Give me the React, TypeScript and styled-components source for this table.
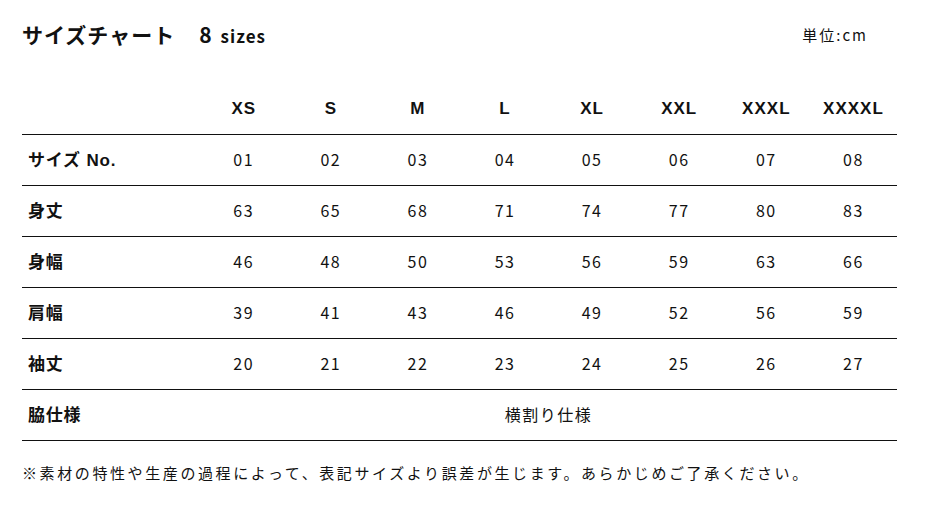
import React from 'react';
import styled, { createGlobalStyle } from 'styled-components';

const GlobalStyle = createGlobalStyle`
    html, body {
        margin: 0;
        padding: 0;
        background: #ffffff;
    }
    body {
        font-family: "Liberation Sans", "Noto Sans CJK JP", sans-serif;
        color: #111111;
    }
`;

const Page = styled.div`
    width: 951px;
    padding: 19px 54px 0 22px;
    box-sizing: border-box;
`;

const Heading = styled.div`
    display: flex;
    align-items: baseline;
    justify-content: space-between;
    height: 35px;
`;

const Title = styled.h1`
    margin: 0;
    font-family: "Noto Sans CJK JP", sans-serif;
    font-size: 21px;
    font-weight: 700;
    letter-spacing: 1px;
`;

const Count = styled.span`
    margin-left: 24px;
    font-size: 21px;
    letter-spacing: 0;
`;

const CountUnit = styled.span`
    margin-left: 9px;
    font-size: 17px;
    letter-spacing: 1px;
`;

const Unit = styled.div`
    font-family: "Noto Sans CJK JP", sans-serif;
    font-size: 15px;
    letter-spacing: 2px;
    padding-right: 29px;
    position: relative;
    top: -2px;
`;

const Table = styled.table`
    margin-top: 29px;
    width: 875px;
    border-collapse: collapse;
    table-layout: fixed;
`;

const HeadCell = styled.th<{ label?: boolean }>`
    height: 51px;
    padding: 0;
    width: ${p => (p.label ? '178px' : '87px')};
    text-align: center;
    font-size: 17px;
    font-weight: 700;
    letter-spacing: 1px;
    vertical-align: middle;
    border-bottom: 1px solid #111111;
`;

const Row = styled.tr`
    height: 51px;
    border-bottom: 1px solid #111111;
`;

const Label = styled.th`
    padding: 0 0 3px 6px;
    text-align: left;
    font-size: 17px;
    font-weight: 700;
    letter-spacing: 0.8px;
`;

const Cell = styled.td`
    padding: 0 0 3px;
    text-align: center;
    font-size: 16px;
    letter-spacing: 1.5px;
    font-family: "Noto Sans CJK JP", sans-serif;
`;

const Note = styled.p`
    margin: 21px 0 0;
    font-family: "Noto Sans CJK JP", sans-serif;
    font-size: 15px;
    letter-spacing: 2.6px;
`;

const sizes = ['XS', 'S', 'M', 'L', 'XL', 'XXL', 'XXXL', 'XXXXL'];

const rows: { label: string; values: string[] }[] = [
    { label: 'サイズ No.', values: ['01', '02', '03', '04', '05', '06', '07', '08'] },
    { label: '身丈', values: ['63', '65', '68', '71', '74', '77', '80', '83'] },
    { label: '身幅', values: ['46', '48', '50', '53', '56', '59', '63', '66'] },
    { label: '肩幅', values: ['39', '41', '43', '46', '49', '52', '56', '59'] },
    { label: '袖丈', values: ['20', '21', '22', '23', '24', '25', '26', '27'] },
];

const App: React.FC = () => {
    return (
        <>
            <GlobalStyle />
            <Page>
                <Heading>
                    <Title>
                        サイズチャート
                        <Count>8</Count>
                        <CountUnit>sizes</CountUnit>
                    </Title>
                    <Unit>単位:cm</Unit>
                </Heading>
                <Table>
                    <thead>
                        <tr>
                            <HeadCell label />
                            {sizes.map(s => (
                                <HeadCell key={s}>{s}</HeadCell>
                            ))}
                        </tr>
                    </thead>
                    <tbody>
                        {rows.map(r => (
                            <Row key={r.label}>
                                <Label>{r.label}</Label>
                                {r.values.map((v, i) => (
                                    <Cell key={i}>{v}</Cell>
                                ))}
                            </Row>
                        ))}
                        <Row>
                            <Label>脇仕様</Label>
                            <Cell colSpan={8}>横割り仕様</Cell>
                        </Row>
                    </tbody>
                </Table>
                <Note>※素材の特性や生産の過程によって、表記サイズより誤差が生じます。あらかじめご了承ください。</Note>
            </Page>
        </>
    );
};

export default App;
